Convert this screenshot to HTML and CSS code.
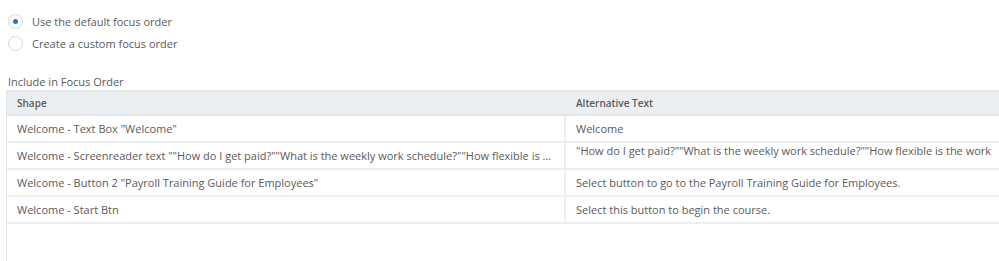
FILE: index.html
```html
<!DOCTYPE html>
<html lang="en">
<head>
    <meta charset="UTF-8">
    <title>Focus Order</title>
    <link rel="stylesheet" href="styles.css">
</head>
<body>
    <div class="options">
        <label class="option">
            <span class="radio checked"></span>
            Use the default focus order
        </label>
        <label class="option">
            <span class="radio"></span>
            Create a custom focus order
        </label>
    </div>

    <div class="section-title">Include in Focus Order</div>
    <div class="grid">
        <table>
            <thead>
                <tr>
                    <th class="col-shape">Shape</th>
                    <th>Alternative Text</th>
                </tr>
            </thead>
            <tbody>
                <tr>
                    <td>Welcome - Text Box "Welcome"</td>
                    <td>Welcome</td>
                </tr>
                <tr>
                    <td>Welcome - Screenreader text ""How do I get paid?""What is the weekly work schedule?""How flexible is ...</td>
                    <td class="raised">"How do I get paid?""What is the weekly work schedule?""How flexible is the work</td>
                </tr>
                <tr>
                    <td>Welcome - Button 2 "Payroll Training Guide for Employees"</td>
                    <td>Select button to go to the Payroll Training Guide for Employees.</td>
                </tr>
                <tr>
                    <td>Welcome - Start Btn</td>
                    <td>Select this button to begin the course.</td>
                </tr>
            </tbody>
        </table>
    </div>
</body>
</html>
```

FILE: styles.css
```css
body {
    font-family: "Open Sans", "Noto Sans", sans-serif;
    font-size: 11px;
    color: #5a5a5a;
    margin: 0;
    background: white;
    overflow: hidden;
}
.options {
    display: flex;
    flex-direction: column;
    gap: 5px;
    padding: 13px 0 0 8px;
}
.option {
    display: flex;
    align-items: center;
    gap: 9px;
    height: 17px;
}
.radio {
    width: 15px;
    height: 15px;
    box-sizing: border-box;
    border: 1px solid #d4d8dc;
    border-radius: 50%;
    display: flex;
    align-items: center;
    justify-content: center;
}
.radio.checked::after {
    content: "";
    width: 5px;
    height: 5px;
    border-radius: 50%;
    background: #1f78d1;
}
.section-title {
    margin: 22px 0 1px 8px;
    line-height: 15px;
}
.grid {
    margin-left: 6px;
    width: 992px;
    height: 171px;
    border-left: 1px solid #e3e6e9;
    overflow: hidden;
}
table {
    border-collapse: collapse;
    width: 992px;
    table-layout: fixed;
}
th, td {
    text-align: left;
    padding: 0 10px;
    white-space: nowrap;
    overflow: hidden;
    border-bottom: 2px solid #eceef0;
}
th {
    background: #eceff2;
    font-weight: 600;
    font-size: 10px;
    height: 22px;
    border-top: 2px solid #e6e9ec;
    border-bottom: 2px solid #e1e5e8;
}
td {
    height: 25px;
}
th + th, td + td {
    border-left: 2px solid #eceef0;
}
.col-shape {
    width: 537px;
}
.raised {
    vertical-align: top;
    padding-top: 0;
}
```
